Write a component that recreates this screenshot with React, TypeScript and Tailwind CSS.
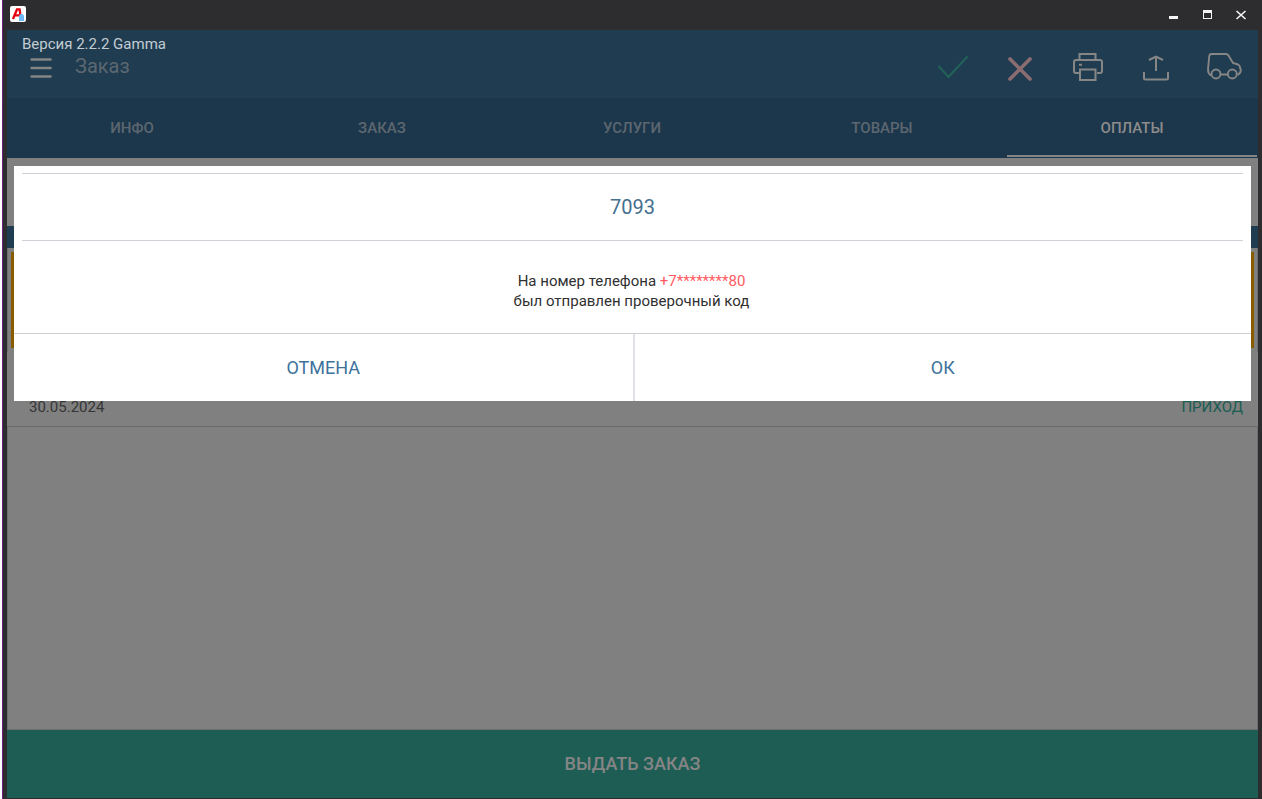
import React from 'react';

const TABS = [
  { id: 'info', label: 'ИНФО' },
  { id: 'order', label: 'ЗАКАЗ' },
  { id: 'services', label: 'УСЛУГИ' },
  { id: 'goods', label: 'ТОВАРЫ' },
  { id: 'payments', label: 'ОПЛАТЫ' }
];

function AppLogo() {
  return (
    <svg width="16" height="16" viewBox="0 0 16 16" aria-hidden="true">
      <rect width="16" height="16" rx="2" fill="#fff" />
      <path d="M3 13 7 3.3h2.6L11 13M5 9.4h5" fill="none" stroke="#e3000f" strokeWidth="2.3" />
      <path d="M9 9.500 10.500 8h2L14 9.500V15H9z" fill="#6bb8f5" />
    </svg>
  );
}

function TitleBar() {
  return (
    <div className="flex h-[30px] items-center justify-between pb-[2px] pl-[3px] pr-[9px]">
      <AppLogo />
      <div className="flex items-center gap-[18px] text-[#f4f4f4]">
        <button type="button" aria-label="Свернуть" className="h-4 w-4">
          <svg width="16" height="16" viewBox="0 0 16 16" fill="currentColor">
            <path d="M4 10h9v3H4z" />
          </svg>
        </button>
        <button type="button" aria-label="Развернуть" className="h-4 w-4">
          <svg width="16" height="16" viewBox="0 0 16 16" fill="currentColor" fillRule="evenodd">
            <path d="M4 4h9v9H4zM5 7v5h7V7z" />
          </svg>
        </button>
        <button type="button" aria-label="Закрыть" className="h-4 w-4">
          <svg width="16" height="16" viewBox="0 0 16 16" fill="none" stroke="currentColor" strokeWidth="1.6">
            <path d="m3.500 5 9 8M12.500 5l-9 8" />
          </svg>
        </button>
      </div>
    </div>
  );
}

function Toolbar() {
  return (
    <header className="relative flex h-[68px] items-center justify-between bg-[#203c51] pl-[23px] pr-4 pt-2 text-[#868686]">
      <span className="absolute left-[15px] top-1 text-[15px] leading-5 text-[#c3ccd3]">
        Версия 2.2.2 Gamma
      </span>
      <div className="flex items-center gap-[23px]">
        <button type="button" aria-label="Меню" className="h-6 w-[22px]">
          <svg width="22" height="24" viewBox="0 0 22 24" fill="none" stroke="#858585" strokeWidth="2.400" strokeLinecap="round">
            <path d="M1.600 3.500h19M1.600 12h19M1.600 20.500h19" />
          </svg>
        </button>
        <h1 className="pb-1 text-xl text-[#5c6770]">Заказ</h1>
      </div>
      <div className="flex items-center gap-8">
        <button type="button" aria-label="Подтвердить" className="h-9 w-9">
          <svg width="36" height="36" viewBox="0 0 36 36" fill="none" stroke="#206358" strokeWidth="2">
            <path d="m4.500 16 10 11L33.500 6.500" />
          </svg>
        </button>
        <button type="button" aria-label="Отменить" className="h-9 w-9">
          <svg width="36" height="36" viewBox="0 0 36 36" fill="none" stroke="#8b6c70" strokeWidth="3.700" strokeLinecap="round">
            <path d="m8 9 20 20M28 9 8 29" />
          </svg>
        </button>
        <button type="button" aria-label="Печать" className="h-9 w-9">
          <svg width="36" height="36" viewBox="0 0 36 36" fill="none" stroke="currentColor" strokeWidth="2">
            <path d="M9.500 9V4h16v5M9 23H6q-2 0-2-2V12q0-2 2-2h24q2 0 2 2v9q0 2-2 2h-3" />
            <path d="M10 19.500h15.500V30H10zM9 14.700h3" />
          </svg>
        </button>
        <button type="button" aria-label="Выгрузить" className="h-9 w-9">
          <svg width="36" height="36" viewBox="0 0 36 36" fill="none" stroke="currentColor" strokeWidth="2">
            <path d="M6 22v6q0 1.500 1.500 1.500h21q1.500 0 1.500-1.500v-6M18 21V6.500M11 10l7-3.500 7 3.500" />
          </svg>
        </button>
        <button type="button" aria-label="Автомобиль" className="h-9 w-9">
          <svg width="36" height="36" viewBox="0 0 36 36" fill="none" stroke="currentColor" strokeWidth="1.900">
            <path d="M5 25.500q-3-2-3-6l1.200-13Q3.500 4 5.500 4h14.300q1.800 0 2.700 1.500l4.500 7.500 5 1.500q2 1 2 3l.800 2.500q0 3.500-3.300 5M14.700 24.500h7" />
            <circle cx="10" cy="24" r="4.500" />
            <circle cx="26.300" cy="24" r="4.500" />
          </svg>
        </button>
      </div>
    </header>
  );
}

interface ConfirmDialogProps {
  code: string;
  phone: string;
  onCodeChange: (value: string) => void;
}

function ConfirmDialog({ code, phone, onCodeChange }: ConfirmDialogProps) {
  return (
    <div
      role="dialog"
      aria-label="Проверочный код"
      className="absolute inset-x-[7px] top-2 bg-white text-[#303030]"
    >
      <div className="px-2 pt-[7px]">
        <input
          type="text"
          aria-label="Код из сообщения"
          value={code}
          onChange={(e) => onCodeChange(e.target.value)}
          className="block h-[68px] w-full border-y border-[#d0d0d8] text-center text-xl text-[#44708f] outline-none"
        />
      </div>
      <p className="pb-[22px] pl-2 pr-[10px] pt-[30px] text-center text-[15px] leading-5">
        На номер телефона <span className="text-[#ff5a5f]">{phone}</span>
        <br />
        был отправлен проверочный код
      </p>
      <div className="grid grid-cols-2 border-t border-[#cfcfd4] text-lg text-[#3c729b]">
        <button type="button" className="h-[67px]">ОТМЕНА</button>
        <button type="button" className="h-[67px] border-l-2 border-[#e0e0e6]">ОК</button>
      </div>
    </div>
  );
}

export default function App() {
  const [activeTab, setActiveTab] = React.useState('payments');
  const [code, setCode] = React.useState('7093');

  return (
    <div className="flex min-h-screen bg-white pl-[2px] font-[Roboto,sans-serif]">
      <div className="flex flex-1 flex-col border-l border-[#6a1f7d] bg-[#2d2d2f] pb-px pl-1 pr-1">
        <TitleBar />
        <Toolbar />
        <nav className="grid h-[60px] grid-cols-5 bg-[#1c364b] pb-px pr-px">
          {TABS.map((tab) => (
            <button
              key={tab.id}
              type="button"
              onClick={() => setActiveTab(tab.id)}
              className={`border-b-2 pt-[3px] text-[15px] font-medium ${
                activeTab === tab.id ? 'border-[#858585] text-[#8c8c8c]' : 'border-transparent text-[#5c6770]'
              }`}
            >
              {tab.label}
            </button>
          ))}
        </nav>

        <main className="relative flex flex-1 flex-col bg-[#808080]">
          <div className="h-[68px]" />
          <div className="h-[22px] bg-[#203c51]" />
          <div className="h-[104px] border-x border-[#6f6f73] px-[3px] py-1">
            <div className="h-24 border-[3px] border-[#8a5c00]" />
          </div>
          <div className="flex h-[75px] items-end justify-between border-b border-[#69696c] pb-[9px] pl-[22px] pr-[15px] text-[15px] leading-5">
            <span className="text-[#363636]">30.05.2024</span>
            <span className="text-[#1a5d52]">ПРИХОД</span>
          </div>
          <div className="flex-1 border-x border-b border-[#6f6f73]" />
          <ConfirmDialog code={code} phone="+7********80" onCodeChange={setCode} />
        </main>

        <button type="button" className="h-[68px] bg-[#1e5d54] text-lg font-medium text-[#858585]">
          ВЫДАТЬ ЗАКАЗ
        </button>
      </div>
    </div>
  );
}
